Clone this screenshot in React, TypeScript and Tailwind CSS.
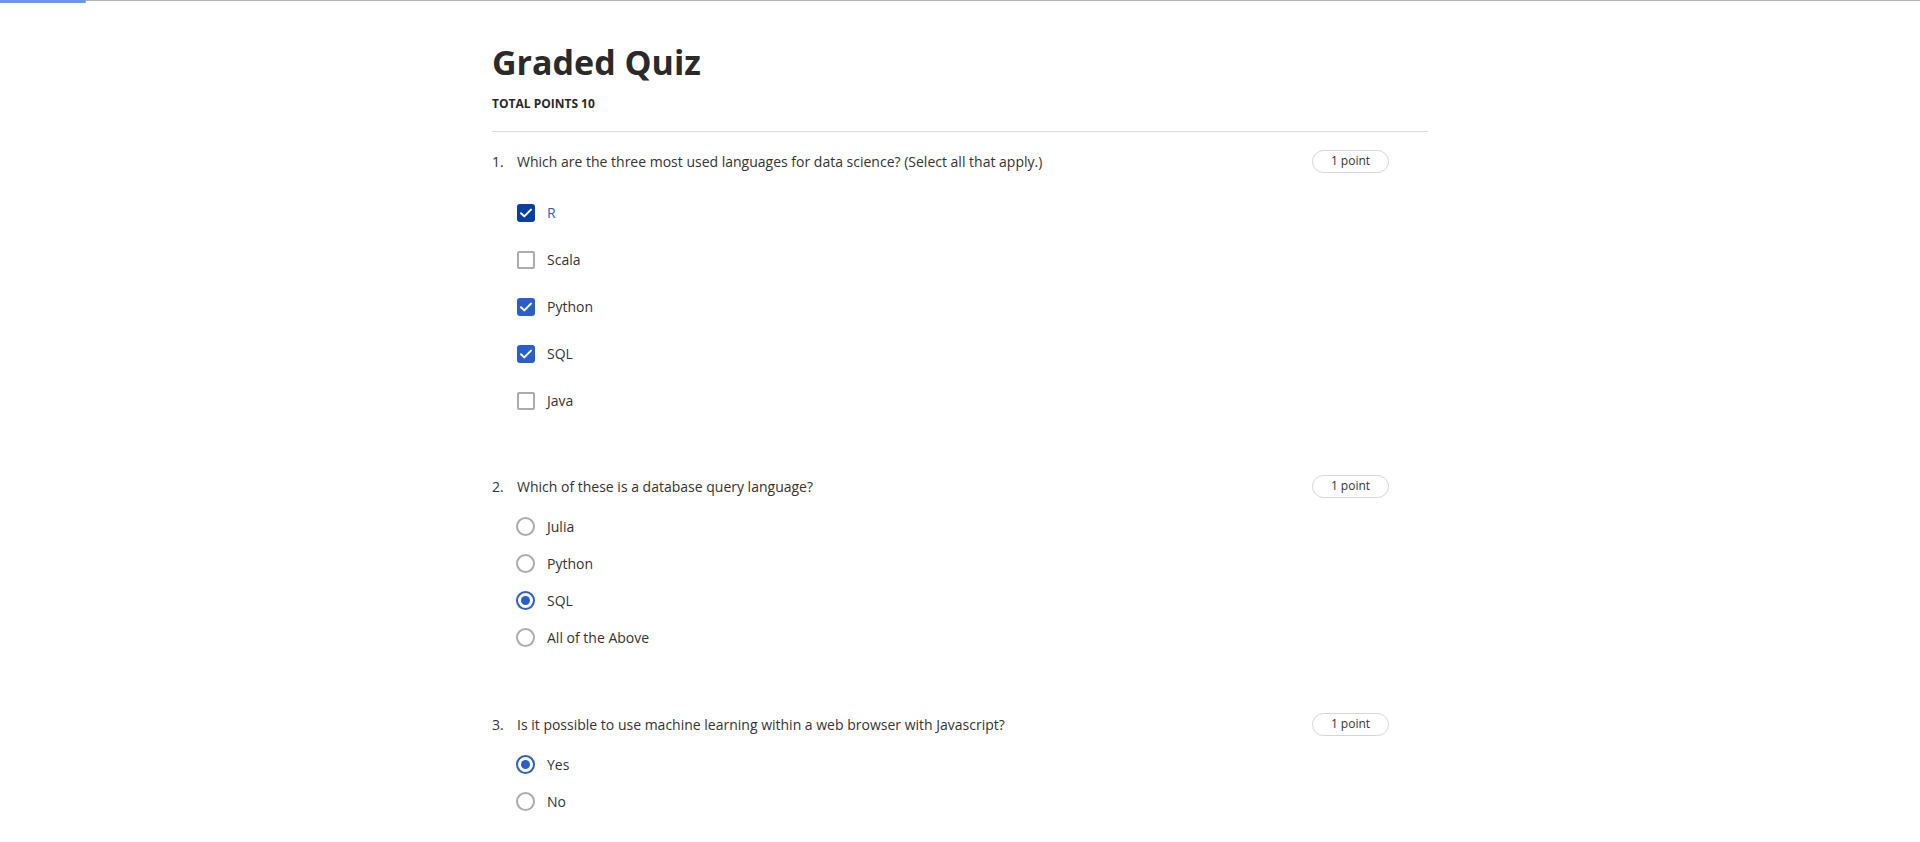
import React from 'react'

type Option = { label: string; checked?: boolean; focused?: boolean }

interface Question {
  num: number
  text: string
  kind: 'checkbox' | 'radio'
  options: Option[]
}

const questions: Question[] = [
  {
    num: 1,
    text: 'Which are the three most used languages for data science? (Select all that apply.)',
    kind: 'checkbox',
    options: [
      { label: 'R', checked: true, focused: true },
      { label: 'Scala' },
      { label: 'Python', checked: true },
      { label: 'SQL', checked: true },
      { label: 'Java' }
    ]
  },
  {
    num: 2,
    text: 'Which of these is a database query language?',
    kind: 'radio',
    options: [
      { label: 'Julia' },
      { label: 'Python' },
      { label: 'SQL', checked: true },
      { label: 'All of the Above' }
    ]
  },
  {
    num: 3,
    text: 'Is it possible to use machine learning within a web browser with Javascript?',
    kind: 'radio',
    options: [{ label: 'Yes', checked: true }, { label: 'No' }]
  }
]

const CheckMark = () => (
  <svg viewBox="0 0 18 18" className="h-[18px] w-[18px]" fill="none">
    <path d="M4 9.2l3.3 3.2L14 5.6" stroke="white" strokeWidth="2" strokeLinecap="round" strokeLinejoin="round" />
  </svg>
)

const CheckboxRow: React.FC<{ option: Option }> = ({ option }) => (
  <div className="flex h-[47px] items-center">
    {option.checked ? (
      <span
        className={
          option.focused
            ? 'flex h-[18px] w-[18px] items-center justify-center rounded-[3px] bg-[#0b3da6]'
            : 'flex h-[18px] w-[18px] items-center justify-center rounded-[3px] bg-[#2a5fc9]'
        }
      >
        <CheckMark />
      </span>
    ) : (
      <span className="h-[18px] w-[18px] rounded-[2px] border-2 border-[#acacac] bg-white" />
    )}
    <span className={option.focused ? 'ml-[12px] text-[14px] text-[#2a5fc9]' : 'ml-[12px] text-[14px] text-[#333]'}>
      {option.label}
    </span>
  </div>
)

const RadioRow: React.FC<{ option: Option }> = ({ option }) => (
  <div className="flex h-[37px] items-center">
    {option.checked ? (
      <span className="flex h-[19px] w-[19px] items-center justify-center rounded-full border-2 border-[#2a5fc9]">
        <span className="h-[9px] w-[9px] rounded-full bg-[#2a5fc9]" />
      </span>
    ) : (
      <span className="h-[19px] w-[19px] rounded-full border-2 border-[#acacac]" />
    )}
    <span className="ml-[12px] text-[14px] text-[#333]">{option.label}</span>
  </div>
)

const QuestionBlock: React.FC<{ q: Question }> = ({ q }) => (
  <div className={q.kind === 'checkbox' ? 'pb-[50px]' : 'pb-[56px]'}>
    <div className="flex h-[24px] items-center pr-[39px]">
      <span className="w-[25px] text-[14px] text-[#333]">{q.num}.</span>
      <span className="flex-1 text-[14px] text-[#333]">{q.text}</span>
      <span className="flex h-[23px] w-[77px] items-center justify-center rounded-full border border-[#d6d6d6] text-[12px] text-[#333]">
        1 point
      </span>
    </div>
    <div className={q.kind === 'checkbox' ? 'mt-[16px] pl-[25px]' : 'mt-[10px] pl-[24px]'}>
      {q.options.map((o) =>
        q.kind === 'checkbox' ? <CheckboxRow key={o.label} option={o} /> : <RadioRow key={o.label} option={o} />
      )}
    </div>
  </div>
)

export default function App() {
  return (
    <div className="min-h-screen bg-white font-['Open_Sans',sans-serif] text-[#333]">
      {/* progress bar */}
      <div className="relative h-px bg-[#b3b3b3]">
        <div className="absolute left-0 top-0 h-[3px] w-[86px] rounded-r-sm bg-[#6c96f2]" />
      </div>

      <div className="mx-auto w-[936px]">
        <h1 className="pt-[39px] text-[34px] font-bold leading-[44px] text-[#2a2a2a]">Graded Quiz</h1>
        <div className="mt-[12px] text-[12px] font-bold leading-[16px] text-[#2a2a2a]">TOTAL POINTS 10</div>
        <div className="mt-[19px] h-px bg-[#dcdcdc]" />

        <div className="pt-[17px]">
          {questions.map((q) => (
            <QuestionBlock key={q.num} q={q} />
          ))}
        </div>
      </div>
    </div>
  )
}
